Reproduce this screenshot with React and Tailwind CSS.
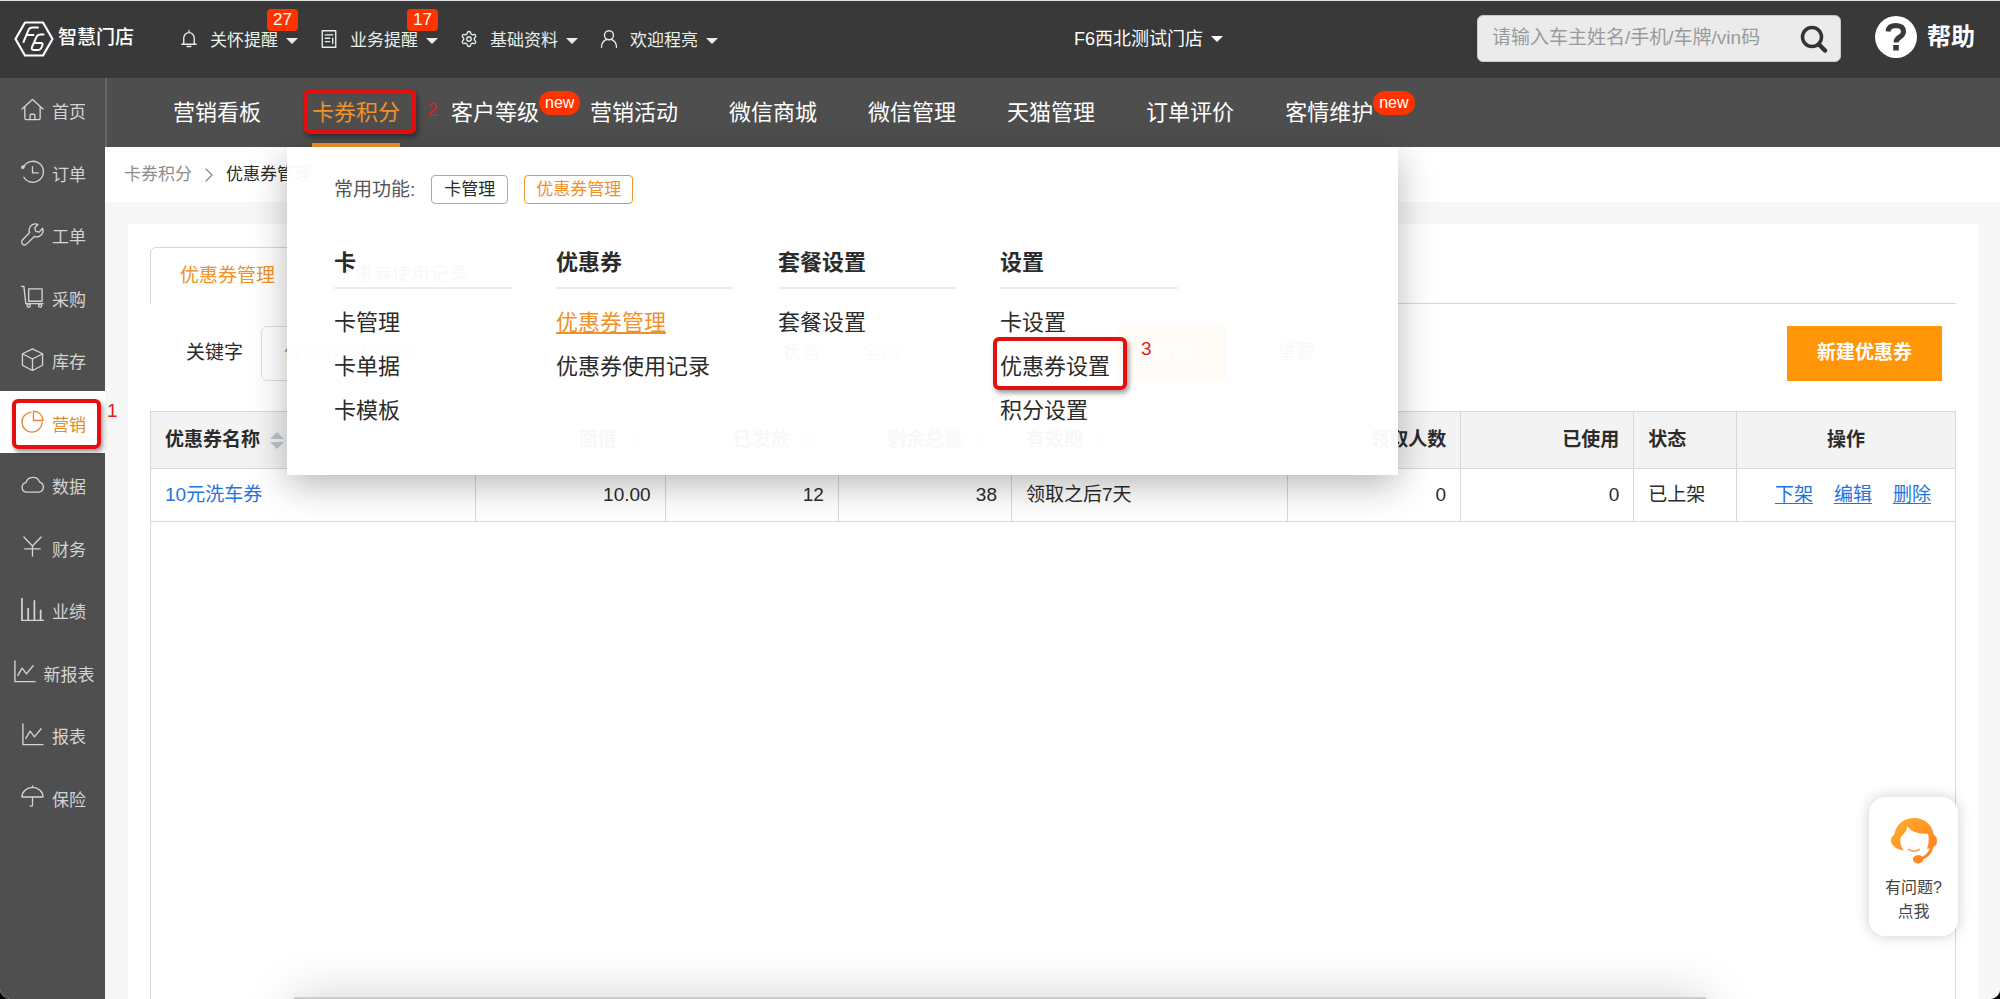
import { useState } from "react";
import clsx from "clsx";
import { Settings } from "lucide-react";

const icon = {
  viewBox: "0 0 24 24",
  fill: "none",
  stroke: "currentColor",
  strokeWidth: 1.4,
  strokeLinecap: "round",
  strokeLinejoin: "round",
  "aria-hidden": true,
};

const sideItems = [
  {
    label: "首页",
    path: <path d="M1 11.500 12 1.500l11 10M4 9.500V21q0 1.500 1.500 1.500h13Q20 22.500 20 21V9.500M9.500 22v-4q0-1 1-1h3q1 0 1 1v4" />,
  },
  {
    label: "订单",
    path: (
      <>
        <path d="M2.500 7.500A11 11 0 1 1 3 18M12 7v6.500h6" />
        <circle cx="2" cy="7.500" r="1.200" fill="currentColor" />
      </>
    ),
  },
  {
    label: "工单",
    path: <path d="M17.500 1.500a6.500 6.500 0 0 0-8.500 8.500L1.500 17.800a2.700 2.700 0 0 0 4.500 4L14 14a6.500 6.500 0 0 0 8.500-8.500l-3.500 4-3.500-.800-1.200-3.600z" />,
  },
  {
    label: "采购",
    path: (
      <>
        <path d="M.500 1.500H3l2 18h18M8 4h14v13H8z" />
        <circle cx="8" cy="21.500" r="1.700" />
        <circle cx="20" cy="21.500" r="1.700" />
      </>
    ),
  },
  {
    label: "库存",
    path: <path d="m12 1 10.500 5v12L12 23.500 1.500 18V6zM1.500 6 12 11.500 22.500 6M12 11.500v12" />,
  },
  {
    label: "营销",
    path: <path d="M10.500 2.200A10.500 10.500 0 1 0 22 13M13 1.200V11h10A10 10 0 0 0 13 1.200" />,
  },
  {
    label: "数据",
    path: <path d="M6 20a5 5 0 0 1-.800-9.900A7.500 7.500 0 0 1 19.500 9.500 5.400 5.400 0 0 1 18.500 20z" />,
  },
  { label: "财务", path: <path d="m3 2 9 9.500L21 2M4 14.500h16M12 11.500V22" /> },
  {
    label: "业绩",
    path: <path strokeWidth="1.800" d="M1 0v23.500h23M7.500 23V11M14 23V3M20.500 23V13" />,
  },
  {
    label: "新报表",
    path: <path d="M2 1v21.500h21M5 16l4.500-7.500 4.500 6L21 6" />,
  },
  {
    label: "报表",
    path: <path d="M2 1v21.500h21M5 16l4.500-7.500 4.500 6L21 6" />,
  },
  {
    label: "保险",
    path: <path d="M1 12.500a11 10 0 0 1 22 0zM12 1v1.500M12 12.500V21q0 1-1 1h-1.500" />,
  },
];

const topItems = [
  {
    label: "关怀提醒",
    badge: "27",
    path: <path d="M2.500 19h19M5 19v-8.500a7 7 0 0 1 14 0V19M12 3V1M9.500 22h5" />,
  },
  {
    label: "业务提醒",
    badge: "17",
    path: <path d="M3 1h18v22H3zM7 6.500h10M7 11h6M7 15.500h6M17 11v7" />,
  },
  { label: "基础资料", path: <Settings strokeWidth={1.8} /> },
  {
    label: "欢迎程亮",
    path: (
      <>
        <circle cx="12" cy="7" r="6" />
        <path d="M2 23c0-5 3-9 7-10.500M22 23c0-5-3-9-7-10.500" />
      </>
    ),
  },
];

const navItems = [
  { label: "营销看板" },
  { label: "卡券积分" },
  { label: "客户等级", isNew: true },
  { label: "营销活动" },
  { label: "微信商城" },
  { label: "微信管理" },
  { label: "天猫管理" },
  { label: "订单评价" },
  { label: "客情维护", isNew: true },
];

const menuColumns = [
  { title: "卡", links: ["卡管理", "卡单据", "卡模板"] },
  { title: "优惠券", links: ["优惠券管理", "优惠券使用记录"] },
  { title: "套餐设置", links: ["套餐设置"] },
  { title: "设置", links: ["卡设置", "优惠券设置", "积分设置"] },
];

const columns = [
  { label: "优惠券名称", width: "w-[18%]", sort: true },
  { label: "面值", width: "w-[10.5%]", sort: true, right: true },
  { label: "已发放", width: "w-[9.6%]", sort: true, right: true },
  { label: "剩余总量", width: "w-[9.6%]", sort: true, right: true },
  { label: "有效期", width: "w-[15.3%]", sort: true },
  { label: "领取人数", width: "w-[9.6%]", right: true },
  { label: "已使用", width: "w-[9.6%]", right: true },
  { label: "状态", width: "w-[5.7%]" },
  { label: "操作", width: "w-[12.1%]", center: true },
];

function Caret() {
  return (
    <span className="border-x-[6px] border-t-[6px] border-x-transparent border-t-current" />
  );
}

function Marker({ className }) {
  return (
    <span
      className={clsx(
        "absolute pointer-events-none rounded-md border-4 border-[#e60f0f] shadow-[2px_3px_5px_rgba(0,0,0,0.4)]",
        className
      )}
    />
  );
}

function MarkerNumber({ children, className }) {
  return (
    <span
      className={clsx(
        "absolute pointer-events-none text-[19px] leading-6 text-[#e02020]",
        className
      )}>
      {children}
    </span>
  );
}

function SortIcon() {
  return (
    <span className="inline-flex w-[34px] flex-col items-center gap-[3px] align-middle">
      <span className="border-x-[7px] border-b-[7px] border-x-transparent border-b-[#c0c4cc]" />
      <span className="border-x-[7px] border-t-[7px] border-x-transparent border-t-[#c0c4cc]" />
    </span>
  );
}

function Logo() {
  return (
    <a href="#" className="flex items-center gap-1 text-white">
      <svg viewBox="0 0 40 36" className="h-9 w-10 shrink-0" aria-hidden="true">
        <path
          d="M11 1.500h18L38.500 18 29 34.500H11L1.500 18z"
          fill="none"
          stroke="currentColor"
          strokeWidth="2.200"
          strokeLinejoin="round"
        />
        <path
          d="M24 6.500h-5.500q-3 0-4 2.500L9.500 21M13 14h6.500M29.500 13.500h-3q-3 0-4 2.500l-4.500 10q-1 3 2 3h4q2.500 0 3.500-2.500l.800-2q1-2.500-1.500-2.500h-6.500"
          fill="none"
          stroke="currentColor"
          strokeWidth="2"
          strokeLinecap="round"
          strokeLinejoin="round"
        />
      </svg>
      <span className="text-[19px] font-medium whitespace-nowrap">智慧门店</span>
    </a>
  );
}

function TopBar() {
  return (
    <header className="flex h-[78px] items-center border-t border-[#dfe3e3] bg-[#393939] pb-[2px] text-white">
      <div className="ml-[14px] mr-[46px] w-30 shrink-0">
        <Logo />
      </div>
      <div className="flex gap-[22px]">
        {topItems.map((item) => (
          <button
            key={item.label}
            className="relative flex items-center gap-3 text-[17px] leading-6 text-[#e8f0ec]">
            <svg {...icon} strokeWidth="1.800" className="size-[18px]">
              {item.path}
            </svg>
            <span className="flex items-center gap-2 pt-1">
              {item.label}
              <Caret />
            </span>
            {item.badge && (
              <span className="absolute -top-4 right-0 rounded bg-[#ff3300] px-[6px] text-[17px] leading-[22px] text-white">
                {item.badge}
              </span>
            )}
          </button>
        ))}
      </div>
      <button className="ml-auto mr-[254px] flex items-center gap-2 text-lg leading-6">
        F6西北测试门店
        <Caret />
      </button>
      <form className="flex h-[47px] w-[364px] items-center rounded-md border border-[#c8c8c8] bg-[#ebebeb]">
        <input
          type="text"
          aria-label="搜索"
          placeholder="请输入车主姓名/手机/车牌/vin码"
          className="min-w-0 flex-1 bg-transparent pl-[14px] text-[19px] text-gray-900 outline-none placeholder:text-[#9a9a9a]"
        />
        <button type="button" aria-label="查找" className="mr-3 text-[#333]">
          <svg viewBox="0 0 28 28" className="size-7" aria-hidden="true">
            <circle cx="12" cy="12" r="9.500" fill="none" stroke="currentColor" strokeWidth="3.500" />
            <path d="m19 19.500 6 6" stroke="currentColor" strokeWidth="4.500" strokeLinecap="round" />
          </svg>
        </button>
      </form>
      <a href="#" className="ml-[34px] mr-[25px] flex items-center gap-[10px] pb-1 text-2xl font-bold">
        <span className="flex size-[42px] items-center justify-center rounded-full bg-white">
          <svg viewBox="0 0 24 30" className="h-[30px] w-6" aria-hidden="true">
            <path
              d="M4 9.500Q4.500 3.500 12 3.500q7.500.300 7.500 6 0 3-3.700 5.500-3.800 2.300-3.800 5.500"
              fill="none"
              stroke="#393939"
              strokeWidth="5"
            />
            <path d="M9.200 23h5.600v5.500H9.200z" fill="#393939" />
          </svg>
        </span>
        帮助
      </a>
    </header>
  );
}

function SideBar({ active, onSelect }) {
  return (
    <aside className="relative w-[105px] shrink-0 bg-[#4f4f4f]">
      <ul className="grid h-[750px] grid-rows-12">
        {sideItems.map((item) => (
          <li key={item.label} className="relative">
            <button
              onClick={() => onSelect(item.label)}
              className={clsx(
                "flex h-full w-full items-center justify-center gap-2 pl-[2px] text-[17px] leading-6",
                item.label === active ? "bg-white text-[#e08a2c]" : "text-[#d4d4d4]"
              )}>
              <svg {...icon} className="size-[23px]">
                {item.path}
              </svg>
              <span className="pt-2">{item.label}</span>
            </button>
            {item.label === "营销" && (
              <>
                <Marker className="inset-y-1 top-2 left-3 right-1" />
                <MarkerNumber className="left-full top-2 ml-[2px]">1</MarkerNumber>
              </>
            )}
          </li>
        ))}
      </ul>
    </aside>
  );
}

function MegaMenu() {
  return (
    <div className="absolute -left-[25px] top-full z-20 h-[328px] w-[1111px] bg-white/[0.97] pl-[47px] pt-7 text-[#2b2b2b] shadow-[0_10px_34px_rgba(0,0,0,0.28)]">
      <div className="flex items-center gap-4">
        <span className="text-[19px] leading-[29px] text-[#555]">常用功能:</span>
        <a
          href="#"
          className="rounded-sm border border-[#aaa] px-3 text-[17px] leading-[27px]">
          卡管理
        </a>
        <a
          href="#"
          className="rounded-sm border border-[#f0912a] px-[11px] text-[17px] leading-[27px] text-[#f0912a]">
          优惠券管理
        </a>
      </div>
      <div className="mt-[43px] flex gap-11">
        {menuColumns.map((col) => (
          <div key={col.title} className="w-[178px]">
            <h3 className="mb-3 border-b-2 border-[#ececec] pb-2 text-[22px] font-bold leading-8">
              {col.title}
            </h3>
            <ul>
              {col.links.map((link) => (
                <li key={link} className="relative flex h-[44px] items-center">
                  <a
                    href="#"
                    className={clsx(
                      "text-[22px] leading-8",
                      link === "优惠券管理" && "text-[#f0912a] underline underline-offset-2"
                    )}>
                    {link}
                  </a>
                  {link === "优惠券设置" && (
                    <>
                      <Marker className="-left-[7px] -top-2 h-[53px] w-[134px]" />
                      <MarkerNumber className="-top-2 left-[141px]">3</MarkerNumber>
                    </>
                  )}
                </li>
              ))}
            </ul>
          </div>
        ))}
      </div>
    </div>
  );
}

function NavBar() {
  return (
    <nav className="border-l-2 border-[#666] bg-[#4e4e4e] pl-[66px]">
      <ul className="flex h-[69px] gap-[51px]">
        {navItems.map((item) => (
          <li key={item.label} className="relative">
            <a
              href="#"
              className={clsx(
                "flex h-full items-center border-y-4 border-transparent text-[22px] whitespace-nowrap",
                item.label === "卡券积分"
                  ? "border-b-[#f0912a] text-[#f0912a]"
                  : "text-white"
              )}>
              {item.label}
            </a>
            {item.isNew && (
              <span className="absolute left-full top-[13px] rounded-full bg-[#ff3300] px-[6px] text-base leading-6 text-white">
                new
              </span>
            )}
            {item.label === "卡券积分" && (
              <>
                <Marker className="-left-2 -right-4 top-[11px] h-[45px]" />
                <MarkerNumber className="left-full top-5 ml-[27px]">2</MarkerNumber>
                <MegaMenu />
              </>
            )}
          </li>
        ))}
      </ul>
    </nav>
  );
}

function Filters() {
  return (
    <form className="flex h-[107px] items-center pb-2 pl-9 pr-[14px] text-[19px]">
      <label htmlFor="keyword" className="mr-[18px]">
        关键字
      </label>
      <input
        id="keyword"
        type="text"
        placeholder="优惠券名称查询"
        className="h-[55px] w-[420px] rounded-md border border-[#dcdfe6] px-[22px] placeholder:text-[#999]"
      />
      <label htmlFor="status" className="ml-[101px] mr-[18px]">
        状态
      </label>
      <select
        id="status"
        className="h-[55px] w-[200px] appearance-none rounded-md border border-[#dcdfe6] px-[22px] text-[#666]">
        <option>全部</option>
      </select>
      <button
        type="button"
        className="ml-[78px] h-[55px] w-[110px] bg-[#ff9100] text-white">
        查询
      </button>
      <button
        type="button"
        className="ml-[18px] h-[55px] w-[104px] border border-[#eee]">
        重置
      </button>
      <button
        type="button"
        className="ml-auto h-[55px] w-[155px] bg-[#ff9507] font-bold text-white">
        新建优惠券
      </button>
    </form>
  );
}

function CouponTable() {
  return (
    <div className="flex-1 border-x border-[#d8d8dc]">
      <table className="w-full table-fixed border-collapse text-[19px]">
        <thead>
          <tr className="h-[57px] border-y border-[#d8d8dc] bg-[#f3f3f3]">
            {columns.map((col) => (
              <th
                key={col.label}
                className={clsx(
                  "border-l border-[#d8d8dc] px-[14px] font-bold whitespace-nowrap first:border-l-0",
                  col.width,
                  col.right ? "text-right" : col.center ? "text-center" : "text-left"
                )}>
                {col.label}
                {col.sort && <SortIcon />}
              </th>
            ))}
          </tr>
        </thead>
        <tbody>
          <tr className="h-[53px] border-b border-[#d8d8dc] *:border-l *:border-[#d8d8dc] *:px-[14px] *:first:border-l-0">
            <td>
              <a href="#" className="text-[#2373e0]">
                10元洗车券
              </a>
            </td>
            <td className="text-right">10.00</td>
            <td className="text-right">12</td>
            <td className="text-right">38</td>
            <td>领取之后7天</td>
            <td className="text-right">0</td>
            <td className="text-right">0</td>
            <td>已上架</td>
            <td>
              <div className="flex justify-end gap-[21px] pr-[10px] text-[#2373e0] underline underline-offset-2">
                <a href="#">下架</a>
                <a href="#">编辑</a>
                <a href="#">删除</a>
              </div>
            </td>
          </tr>
        </tbody>
      </table>
    </div>
  );
}

function HelpWidget() {
  return (
    <button className="absolute bottom-[63px] right-[42px] flex h-[139px] w-[89px] flex-col items-center rounded-2xl bg-white pt-[21px] text-base leading-6 text-[#444] shadow-[0_0_14px_rgba(0,0,0,0.2)]">
      <svg viewBox="0 0 44 44" className="mb-3 size-[46px]" aria-hidden="true">
        <defs>
          <linearGradient id="hair" x1="0" y1="0" x2="1" y2="1">
            <stop offset="0" stopColor="#ffb02e" />
            <stop offset="1" stopColor="#ff7a1c" />
          </linearGradient>
        </defs>
        <path
          d="M3 16C5 6 12 0 22 0s17 6 19 16q3 2 3 6t-3.500 6q-1.500 8-9.500 11.500a5 4 0 1 1-1-2.500q5-2 7-8l-2.500.500q2.500-7 1-14.500Q21 16 15.500 8q0 5-6 10-2 7 2.500 13Q5 30 3 27q-3-2-3-5.500T3 16z"
          fill="url(#hair)"
        />
        <path d="M17 30q5 3.500 10 0" fill="none" stroke="#ff9a3c" strokeWidth="1.500" strokeLinecap="round" />
      </svg>
      <span>有问题?</span>
      <span>点我</span>
    </button>
  );
}

export default function App() {
  const [active, setActive] = useState("营销");

  return (
    <div className="bg-black">
      <div className="relative flex min-h-screen flex-col overflow-hidden rounded-b-[10px] bg-white font-['Liberation_Sans','Noto_Sans_CJK_SC',sans-serif] text-[#2b2b2b]">
        <TopBar />
        <div className="flex flex-1">
          <SideBar active={active} onSelect={setActive} />
          <div className="flex min-w-0 flex-1 flex-col">
            <NavBar />
            <div className="flex h-[55px] items-center gap-3 bg-white pl-[19px] text-[17px] text-[#8c8c8c]">
              <a href="#">卡券积分</a>
              <svg {...icon} viewBox="0 0 10 16" className="h-4 w-[10px]">
                <path d="m2 2 6 6-6 6" />
              </svg>
              <span className="text-[#2b2b2b]">优惠券管理</span>
            </div>
            <main className="flex flex-1 flex-col bg-[#f7f7f7] pl-[23px] pr-[22px] pt-[22px]">
              <div className="flex flex-1 flex-col bg-white px-[22px] pt-[23px]">
                <div className="flex h-[57px] border-b border-[#d8d8dc] text-[19px]">
                  <button className="-mb-px rounded-t-md border border-b-0 border-[#d8d8dc] bg-white px-[29px] text-[#f0912a]">
                    优惠券管理
                  </button>
                  <button className="px-[30px]">优惠券使用记录</button>
                </div>
                <Filters />
                <CouponTable />
              </div>
            </main>
          </div>
        </div>
        <HelpWidget />
        <div className="pointer-events-none absolute inset-x-[294px] -bottom-[58px] h-[60px] bg-[#ccc] shadow-[0_0_50px_rgba(0,0,0,0.18)]" />
      </div>
    </div>
  );
}
